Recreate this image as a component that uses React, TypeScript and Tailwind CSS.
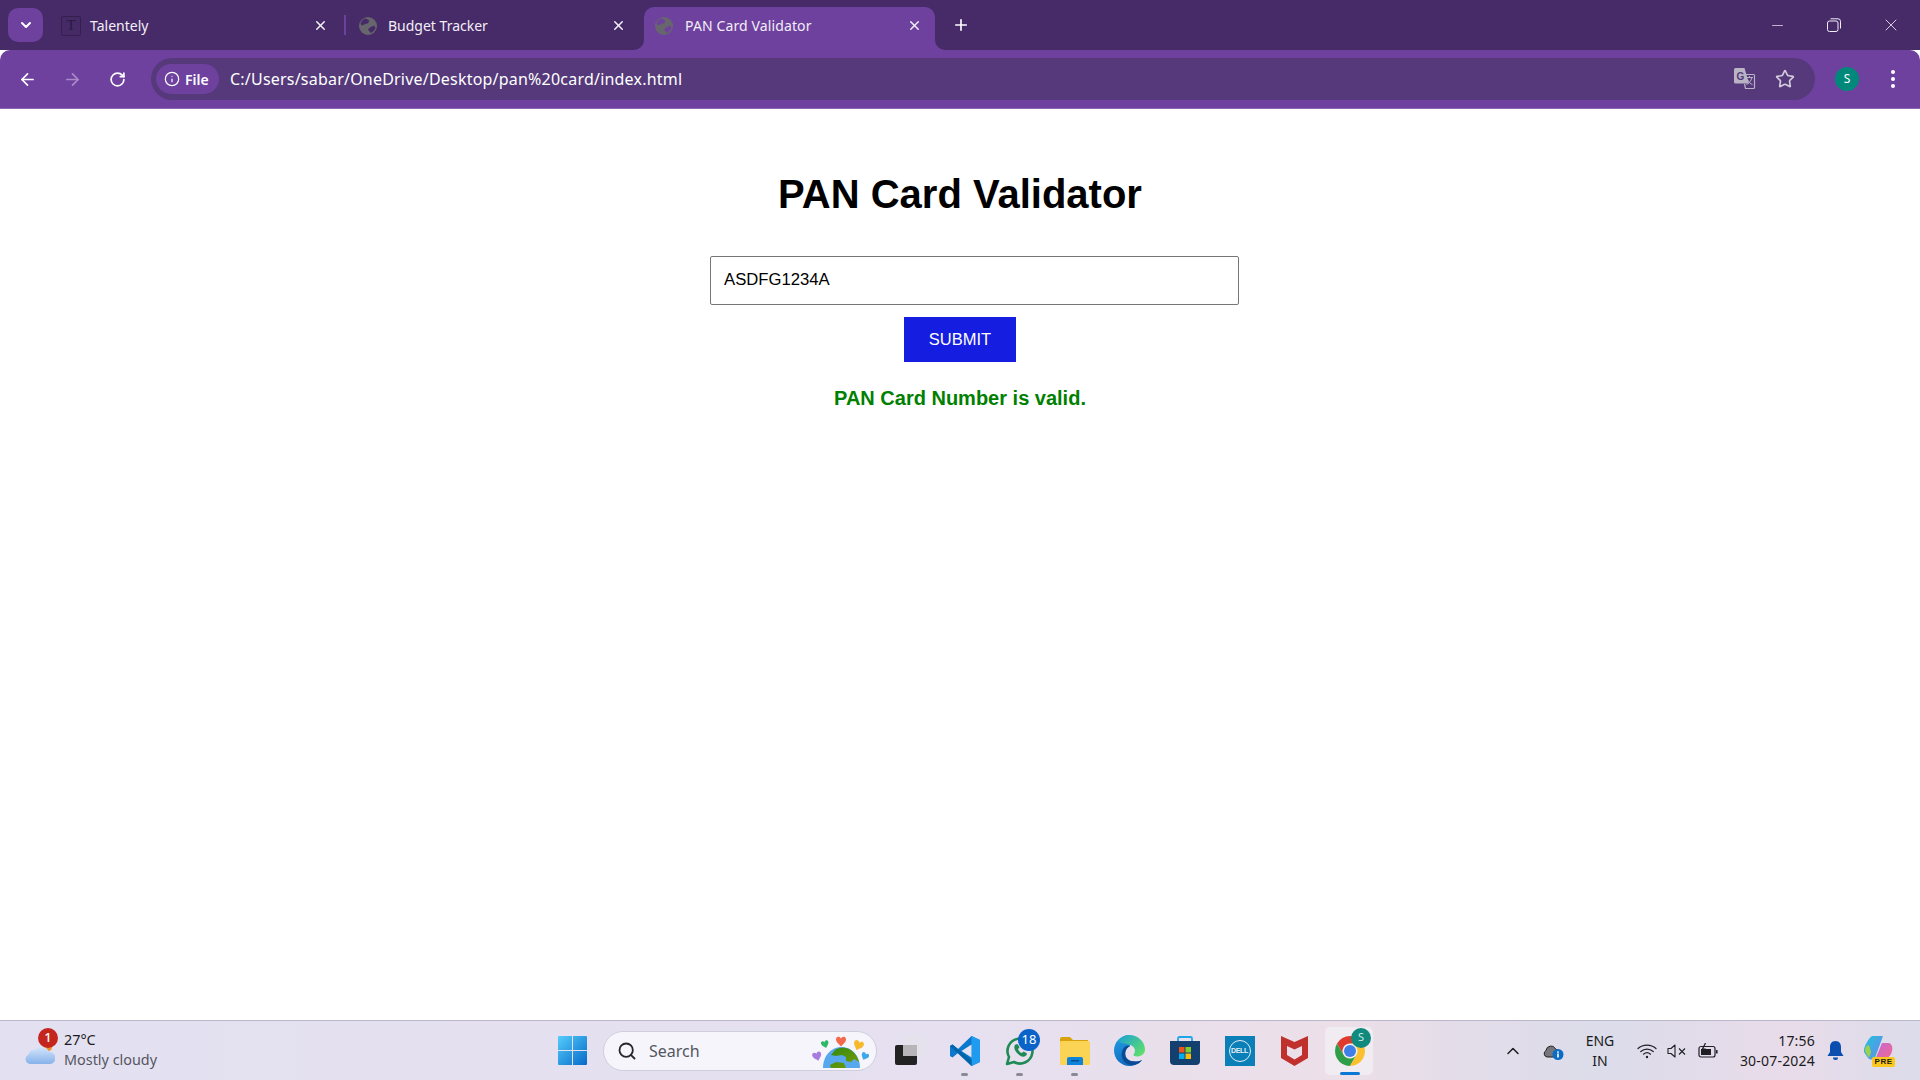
import { ArrowLeft, ArrowRight, ChevronDown, ChevronUp, Info, Minus, Plus, RotateCw, Search, Star, X } from "lucide-react"

const uiFont = { fontFamily: '"Noto Sans", "Open Sans", sans-serif' }

// globe shown for local files in the tab strip
const GlobeIcon = ({ cut }: { cut: string }) => (
  <svg width="18" height="18" viewBox="0 0 18 18">
    <circle cx="9" cy="9" r="9" fill="#66666c" />
    <path d="M6 1.500 10 3 9.500 6 6.500 7 3 8.500 1.500 7C2 4.500 3.500 2.500 6 1.500Z M11 10.500 15 8.500 16.500 10.500C16 13 14 15 12 16L10.500 14.500 9 12.500Z" fill={cut} />
  </svg>
)

const TalentelyIcon = () => (
  <div className="flex h-[20px] w-[20px] items-center justify-center rounded-[2px] border border-[#33204f] bg-[#452a66] text-[15px] leading-none text-[#2a1a42]" style={{ fontFamily: '"Liberation Serif", serif' }}>
    T
  </div>
)

const TabCorner = ({ side }: { side: "left" | "right" }) => (
  <svg width="10" height="10" viewBox="0 0 10 10" className={`absolute bottom-0 ${side === "left" ? "left-[-10px]" : "right-[-10px]"}`}>
    <path d={side === "left" ? "M10 0V10H0A10 10 0 0 0 10 0Z" : "M0 0V10H10A10 10 0 0 1 0 0Z"} fill="#6e419f" />
  </svg>
)

const Tab = ({ title, icon, active }: { title: string; icon: React.ReactNode; active?: boolean }) => (
  <div className={`relative flex h-[43px] w-[291px] items-center rounded-t-[10px] pb-[6px] pl-[11px] pr-[13px] ${active ? "bg-[#6e419f]" : ""}`}>
    {active && <TabCorner side="left" />}
    {active && <TabCorner side="right" />}
    <div className={`flex shrink-0 items-center ${active ? "w-[30px]" : "w-[29px]"}`}>{icon}</div>
    <span className={`flex-1 text-[14px] text-[#f3eef8] ${active ? "tracking-[0.12px]" : "tracking-[0px]"}`}>{title}</span>
    <X size={15} strokeWidth={2.4} className="text-[#f3eef8]" />
  </div>
)

const TranslateIcon = () => (
  <svg width="22" height="22" viewBox="0 0 22 22">
    <path d="M1.500 0H10.500L15 15.500H1.500A1.500 1.500 0 0 1 0 14V1.500A1.500 1.500 0 0 1 1.500 0Z" fill="#b9b3c4" />
    <path d="M10.500 6.500H19.500A1 1 0 0 1 20.500 7.500V19.500A1 1 0 0 1 19.500 20.500H11.500L10.500 16" fill="none" stroke="#b9b3c4" strokeWidth="1.200" />
    <text x="2.500" y="11.500" fontSize="10" fontWeight="700" fill="#55397a" fontFamily="Liberation Sans, sans-serif">G</text>
    <path d="M12 9.500H19M15.500 8V9.500M18 9.500C17 13 15 15.500 12.500 16.500M13.500 11.500C14.500 14 16.500 16 18.500 16.500" fill="none" stroke="#b9b3c4" strokeWidth="1" />
  </svg>
)

const WindowsLogo = () => (
  <svg width="29" height="29" viewBox="0 0 29 29">
    <defs>
      <linearGradient id="win" x1="0" y1="0" x2="1" y2="1">
        <stop offset="0" stopColor="#54cdfb" />
        <stop offset="1" stopColor="#0669c9" />
      </linearGradient>
    </defs>
    <path d="M1 0H14V14H0V1A1 1 0 0 1 1 0ZM15 0H28A1 1 0 0 1 29 1V14H15ZM0 15H14V29H1A1 1 0 0 1 0 28ZM15 15H29V28A1 1 0 0 1 28 29H15Z" fill="url(#win)" />
  </svg>
)

const HEART = "M0 -2.500C-1.500 -5.500 -5.500 -4.500 -5 -1 -4.700 1.500 -2 3 0 5.500 2 3 4.700 1.500 5 -1 5.500 -4.500 1.500 -5.500 0 -2.500Z"

const EarthDoodle = () => (
  <svg width="58" height="39" viewBox="0 0 58 39">
    <defs>
      <linearGradient id="land" x1="0" y1="0" x2="1" y2="1">
        <stop offset="0" stopColor="#2f8a12" />
        <stop offset="1" stopColor="#7d9c04" />
      </linearGradient>
    </defs>
    <path d="M12 39C12 27 20 18 30.500 18 41 18 49 27 49 39Z" fill="#58a8ee" />
    <path d="M24 21C30 17 39 18 44 25 46 27 47 30 48 33L43 30 40 33 35 32 35 28 31 26 25 27 20 26ZM19 36 25 33 33 34 35 39H20Z" fill="url(#land)" />
    <path d={HEART} transform="translate(30 12) scale(1)" fill="#f2694b" />
    <path d={HEART} transform="translate(14 15) scale(0.750) rotate(-15)" fill="#2fb866" />
    <path d={HEART} transform="translate(47.500 16) scale(1) rotate(20)" fill="#f7b92c" />
    <path d={HEART} transform="translate(6 27) scale(0.900) rotate(-15)" fill="#a87bde" />
    <path d={HEART} transform="translate(54 27) scale(0.750) rotate(25)" fill="#3ea9ea" />
  </svg>
)

const TaskViewIcon = () => (
  <svg width="30" height="29" viewBox="0 0 30 29">
    <rect x="0" y="9" width="22" height="20" rx="2" fill="#222222" />
    <rect x="8" y="0" width="22" height="20" rx="2" fill="#e4e2ea" fillOpacity="0.85" />
    <rect x="8" y="9" width="14" height="11" fill="#b7b5b8" />
  </svg>
)

const VsCodeIcon = () => (
  <svg width="30" height="30" viewBox="0 0 30 30">
    <path d="M21.500 0 30 4V26L21.500 30 8 17 2.500 21.500 0 20V10L2.500 8.500 8 13Z" fill="#0a78cc" />
    <path d="M21.500 0 30 4V26L21.500 30Z" fill="#1f9cf0" />
    <path d="M21.500 8.500 11.500 15 21.500 21.500Z" fill="#e4e2f3" />
    <path d="M2.500 8.500 21.500 24V30L0 10Z" fill="#0065a9" />
  </svg>
)

const WhatsAppIcon = () => (
  <svg width="30" height="30" viewBox="0 0 30 30">
    <path d="M2 28 4 21A12.500 12.500 0 1 1 9 26Z" fill="none" stroke="#1f8a55" strokeWidth="2.600" strokeLinejoin="round" />
    <path d="M10.500 8.500C8.500 10 9 13.500 12 17 15 20.500 18.500 21.500 20.500 20 22 19 22 17.500 21.500 17L18.500 15.500 17 17C15 16.500 13.500 14.500 13 13L14.500 11.500 13 8.500C12.500 8 11.500 8 10.500 8.500Z" fill="#1f8a55" />
  </svg>
)

const ExplorerIcon = () => (
  <svg width="30" height="28" viewBox="0 0 30 28">
    <path d="M0 2A2 2 0 0 1 2 0H10L13 3H28V10H0Z" fill="#d9a20c" />
    <rect x="0" y="4" width="30" height="24" rx="1.500" fill="#fcd455" />
    <path d="M7 22A2 2 0 0 1 9 20H21A2 2 0 0 1 23 22V28H7Z" fill="#0d83d9" />
    <rect x="11" y="23" width="8" height="1.500" fill="#0a4f92" />
  </svg>
)

const EdgeIcon = () => (
  <svg width="31" height="31" viewBox="0 0 31 31">
    <defs>
      <linearGradient id="edgeTop" x1="0" y1="0" x2="1" y2="0.800">
        <stop offset="0" stopColor="#1a9fd8" />
        <stop offset="1" stopColor="#5fe06a" />
      </linearGradient>
      <linearGradient id="edgeLow" x1="0" y1="0" x2="0.300" y2="1">
        <stop offset="0" stopColor="#24a0e6" />
        <stop offset="1" stopColor="#0f6cc0" />
      </linearGradient>
    </defs>
    <path d="M15.500 0C7 0 0 7 0 15.500 0 24 7 31 15.500 31 21 31 25.500 28.500 28 25 22 28 15 26.500 12.500 23 10 19 11.500 13 16 11Z" fill="url(#edgeLow)" />
    <path d="M4 5.500C7 2 11 0 15.500 0 24 0 31 7 31 14.500 31 19 27 21.500 23 21.500 21 21.500 19 20.500 19.500 19.500 22 17 21.500 12 16.500 10 11 8 6 9 4 5.500Z" fill="url(#edgeTop)" />
    <path d="M12 11C7 14 6 22 10.500 27 14 30.500 19 30.500 23 29 25 28 27 26.500 28 25 22 28 15 26.500 12.500 23 10 19 11 14 16 11 15 10.500 13.500 10.500 12 11Z" fill="#0c4a94" />
  </svg>
)

const StoreIcon = () => (
  <svg width="30" height="30" viewBox="0 0 30 30">
    <path d="M8 5V2.500A1.500 1.500 0 0 1 9.500 1H20.500A1.500 1.500 0 0 1 22 2.500V5" fill="none" stroke="#1da7e8" strokeWidth="1.800" />
    <path d="M0 5H30V25A4 4 0 0 1 26 29H4A4 4 0 0 1 0 25Z" fill="#14406f" />
    <rect x="9" y="11" width="5.500" height="5.500" fill="#f1511b" />
    <rect x="15.500" y="11" width="5.500" height="5.500" fill="#80cc28" />
    <rect x="9" y="17.500" width="5.500" height="5.500" fill="#00adef" />
    <rect x="15.500" y="17.500" width="5.500" height="5.500" fill="#fbbc09" />
  </svg>
)

const DellIcon = () => (
  <div className="flex h-[30px] w-[30px] items-center justify-center bg-[#0a7fb8]">
    <div className="flex h-[22px] w-[22px] items-center justify-center rounded-full border-[1.500px] border-[#e6eef5] text-[7px] font-bold leading-none tracking-[-0.3px] text-[#e6eef5]" style={{ fontFamily: '"Liberation Sans", sans-serif' }}>
      DELL
    </div>
  </div>
)

const McAfeeIcon = () => (
  <svg width="27" height="30" viewBox="0 0 27 30">
    <path d="M0 0 13.500 6 27 0V22L13.500 30 0 22ZM6 10V19L13.500 23.500 21 19V10L13.500 13.500Z" fill="#c0312e" fillRule="evenodd" />
  </svg>
)

const ChromeIcon = () => (
  <svg width="30" height="30" viewBox="0 0 30 30">
    <path d="M27.990 7.500A15 15 0 0 0 2.010 7.500L8.500 18.750A7.500 7.500 0 0 1 15 7.500Z" fill="#e0392d" />
    <path d="M2.010 7.500A15 15 0 0 0 15 30L21.500 18.750A7.500 7.500 0 0 1 8.500 18.750Z" fill="#2f9e49" />
    <path d="M15 30A15 15 0 0 0 27.990 7.500H15A7.500 7.500 0 0 1 21.500 18.750Z" fill="#fbc02d" />
    <circle cx="15" cy="15" r="6" fill="#3f7fe8" />
  </svg>
)

const OneDriveInfo = () => (
  <svg width="21" height="20" viewBox="0 0 21 20">
    <path d="M4 16A3.500 3.500 0 0 1 3 9.500 5 5 0 0 1 12.500 8 3 3 0 0 1 15 11V16Z" fill="#77767d" stroke="#222" strokeWidth="1" />
    <circle cx="15" cy="13.500" r="5.500" fill="#0a6cc4" />
    <rect x="14.200" y="12.500" width="1.600" height="4" fill="#fff" />
    <rect x="14.200" y="10.300" width="1.600" height="1.500" fill="#fff" />
  </svg>
)

const WifiIcon = () => (
  <svg width="20" height="16" viewBox="0 0 20 16" fill="none" stroke="#1f1f24" strokeWidth="1.200" strokeLinecap="round">
    <path d="M1 5.500C6 1 14 1 19 5.500M3.800 8.500C7.500 5.200 12.500 5.200 16.200 8.500M6.500 11.200C8.500 9.500 11.500 9.500 13.500 11.200" />
    <circle cx="10" cy="14" r="1.200" fill="#1f1f24" stroke="none" />
  </svg>
)

const MuteIcon = () => (
  <svg width="19" height="14" viewBox="0 0 19 14" fill="none" stroke="#1f1f24" strokeWidth="1.100">
    <path d="M1 4.500H4L8 1V13L4 9.500H1Z" strokeLinejoin="round" />
    <path d="M12 4.500 18 10.500M18 4.500 12 10.500" />
  </svg>
)

const BatteryIcon = () => (
  <svg width="20" height="16" viewBox="0 0 20 16">
    <rect x="1" y="3.500" width="16" height="10.500" rx="2" fill="none" stroke="#1f1f24" strokeWidth="1.200" />
    <rect x="3" y="6" width="10" height="6" fill="#1f1f24" />
    <rect x="18" y="7" width="1.600" height="3.500" rx="0.500" fill="#1f1f24" />
    <path d="M7.500 0 4.500 6H7L5.500 9" fill="none" stroke="#1f1f24" strokeWidth="1.200" />
  </svg>
)

const BellIcon = () => (
  <svg width="17" height="20" viewBox="0 0 17 20">
    <path d="M8.500 0C4.500 0 3 3 3 6V11L0.500 15H16.500L14 11V6C14 3 12.500 0 8.500 0Z" fill="#0a4fb0" />
    <path d="M6 16.500H11A2.500 2.500 0 0 1 6 16.500Z" fill="#0a4fb0" />
  </svg>
)

const CopilotIcon = () => (
  <div className="relative h-[29px] w-[30px]">
    <svg width="29" height="24" viewBox="0 0 29 24">
      <defs>
        <linearGradient id="copA" x1="0" y1="0" x2="1" y2="1">
          <stop offset="0" stopColor="#21c4d8" />
          <stop offset="0.600" stopColor="#4f9de8" />
          <stop offset="1" stopColor="#3ecf7a" />
        </linearGradient>
        <linearGradient id="copB" x1="0" y1="0" x2="1" y2="1">
          <stop offset="0" stopColor="#c467dc" />
          <stop offset="1" stopColor="#f26a8a" />
        </linearGradient>
      </defs>
      <path d="M8 0H19L11 22C9 24 6 24 4 22L0 16C-1 13 3 4 8 0Z" fill="url(#copA)" />
      <path d="M2 17 C0 14 1 10 5 9L7 16 5 22Z" fill="#9ad24a" />
      <path d="M18 7H25C28 8 29 12 28 15 27 20 23 23 19 24H11Z" fill="url(#copB)" />
    </svg>
    <span className="absolute bottom-[-2px] right-[-1px] rounded-[2px] bg-[#fdc81e] px-[2.500px] text-[8px] font-bold leading-[10px] tracking-[0.5px] text-[#1a1a1a]" style={{ fontFamily: '"Liberation Sans", sans-serif' }}>
      PRE
    </span>
  </div>
)

const Pinned = ({ children, running, active }: { children: React.ReactNode; running?: boolean; active?: boolean }) => (
  <div className="relative flex h-[48px] w-[55px] items-center justify-center">
    {children}
    {running && <span className="absolute bottom-[-1px] h-[3px] w-[7px] rounded-full bg-[#8a8a94]" />}
    {active && <span className="absolute bottom-[0px] h-[3px] w-[20px] rounded-full bg-[#0a78d4]" />}
  </div>
)

export default function App() {
  return (
    <div className="flex h-screen w-full flex-col overflow-hidden bg-white">
      {/* tab strip */}
      <div className="flex h-[50px] shrink-0 items-end bg-[#462b68]" style={uiFont}>
        <div className="mb-[8px] ml-[8px] flex h-[34px] w-[35px] items-center justify-center rounded-[10px] bg-[#6e419f] text-white">
          <ChevronDown size={16} strokeWidth={3} />
        </div>
        <div className="ml-[7px] flex items-end">
          <Tab title="Talentely" icon={<TalentelyIcon />} />
          <div className="mb-[15px] flex w-[7px] justify-center">
            <div className="h-[20px] w-[2px] bg-[#6e419f]" />
          </div>
          <Tab title="Budget Tracker" icon={<GlobeIcon cut="#462b68" />} />
          <div className="w-[5px]" />
          <Tab title="PAN Card Validator" icon={<GlobeIcon cut="#6e419f" />} active />
        </div>
        <div className="mb-[8px] ml-[12px] flex h-[34px] w-[28px] items-center justify-center text-white">
          <Plus size={18} strokeWidth={2.2} />
        </div>
        <div className="mb-[15px] ml-auto flex items-center text-[#f2eef6]">
          <div className="flex w-[56px] justify-center"><Minus size={17} strokeWidth={1} /></div>
          <div className="flex w-[58px] justify-center">
            <svg width="14" height="14" viewBox="0 0 14 14" fill="none" stroke="#f2eef6" strokeWidth="1">
              <rect x="0.500" y="3" width="10.500" height="10.500" rx="2" />
              <path d="M3.500 0.800H11A2.500 2.500 0 0 1 13.500 3.300V10.500" />
            </svg>
          </div>
          <div className="flex w-[57px] justify-center pr-[1px]"><X size={20} strokeWidth={1} /></div>
        </div>
      </div>

      {/* toolbar */}
      <div className="flex h-[59px] shrink-0 items-start rounded-t-[10px] border-b border-[#8c66b3] bg-[#6e419f] pt-[8px]" style={uiFont}>
        <div className="flex h-[42px] w-[151px] items-center pl-[18px] text-white">
          <ArrowLeft size={19} strokeWidth={2.2} />
          <ArrowRight size={19} strokeWidth={2.2} className="ml-[26px] text-[#a98ac8]" />
          <RotateCw size={17} strokeWidth={2.4} className="ml-[27px]" />
        </div>
        <div className="flex h-[42px] w-[1664px] items-center rounded-full bg-[#55397a] pl-[5px] pr-[20px]">
          <div className="flex h-[30px] w-[63px] items-center gap-[5px] rounded-full bg-[#6e419f] pl-[8px] text-[14px] font-semibold text-white">
            <Info size={16} strokeWidth={1.8} />
            File
          </div>
          <span className="ml-[11px] flex-1 text-[16px] tracking-[0.21px] text-white">C:/Users/sabar/OneDrive/Desktop/pan%20card/index.html</span>
          <TranslateIcon />
          <Star size={20} strokeWidth={2} className="ml-[19px] text-[#d3cbdc]" />
        </div>
        <div className="ml-[20px] flex h-[42px] w-[24px] items-center">
          <div className="flex h-[24px] w-[24px] items-center justify-center rounded-full bg-[#00897b] text-[12px] text-white">S</div>
        </div>
        <div className="ml-[32px] flex h-[42px] flex-col items-center justify-center gap-[3px]">
          <span className="h-[4px] w-[4px] rounded-full bg-white" />
          <span className="h-[4px] w-[4px] rounded-full bg-white" />
          <span className="h-[4px] w-[4px] rounded-full bg-white" />
        </div>
      </div>

      {/* page */}
      <main className="flex-1 bg-white pt-[62px] text-black" style={{ fontFamily: '"Liberation Sans", Arial, sans-serif' }}>
        <div className="mx-auto w-[500px]">
          <h1 className="text-center text-[40px] font-bold leading-[46px]">PAN Card Validator</h1>
          <input
            readOnly
            value="ASDFG1234A"
            className="mt-[39px] box-content block h-[19px] w-full rounded-[2px] border border-[#767676] pb-[15px] pl-[13px] pr-[14px] pt-[13px] text-[16.7px] text-black outline-none"
          />
          <div className="mt-[12px] flex justify-center">
            <button className="h-[45px] w-[112px] bg-[#151ee0] text-[16.5px] uppercase text-white">Submit</button>
          </div>
          <p className="mt-[25px] text-center text-[20px] font-bold leading-[23px] text-[#008000]">PAN Card Number is valid.</p>
        </div>
      </main>

      {/* taskbar */}
      <div className="flex h-[60px] shrink-0 items-center border-t border-[#b9b7c9] bg-[linear-gradient(90deg,#e3e1f1_0%,#e6e0f0_50%,#ecdfe8_70%,#e3dde9_76%,#dcdcea_84%,#e9dcea_93%,#dcdcea_100%)]" style={uiFont}>
        <div className="relative ml-[25px] flex w-[533px] items-center">
          <svg width="30" height="20" viewBox="0 0 30 20" className="mt-[6px]">
            <defs>
              <linearGradient id="cloud" x1="0" y1="0" x2="0" y2="1">
                <stop offset="0" stopColor="#d6e6fb" />
                <stop offset="1" stopColor="#86b2ea" />
              </linearGradient>
            </defs>
            <circle cx="23" cy="3" r="4" fill="#f0902a" />
            <path d="M5 20A5 5 0 0 1 3.500 10.500 6 6 0 0 1 10 6 8 8 0 0 1 24 8 6 6 0 0 1 25 20Z" fill="url(#cloud)" />
          </svg>
          <span className="absolute left-[13px] top-[-2px] flex h-[20px] w-[20px] items-center justify-center rounded-full bg-[#c4261d] text-[13px] font-medium text-white">1</span>
          <div className="mb-[2px] ml-[9px] flex flex-col text-[14.4px] leading-[20px]">
            <span className="text-[#1b1b22]">27°C</span>
            <span className="text-[#55555f]">Mostly cloudy</span>
          </div>
        </div>
        <WindowsLogo />
        <div className="ml-[16px] flex h-[40px] w-[274px] items-center rounded-full border border-[#cfcedd] bg-[#f6f5fc] pl-[13px] pr-[7px]">
          <Search size={20} strokeWidth={2.2} className="text-[#26262b]" />
          <span className="ml-[12px] flex-1 text-[16px] text-[#55555f]">Search</span>
          <div className="mb-[4px]"><EarthDoodle /></div>
        </div>
        <div className="ml-[5px] flex items-center">
          <Pinned><TaskViewIcon /></Pinned>
          <Pinned running><VsCodeIcon /></Pinned>
          <Pinned running>
            <WhatsAppIcon />
            <span className="absolute right-[7px] top-[2px] flex h-[22px] w-[22px] items-center justify-center rounded-full bg-[#0a63c9] text-[13px] text-white">18</span>
          </Pinned>
          <Pinned running><ExplorerIcon /></Pinned>
          <Pinned><EdgeIcon /></Pinned>
          <Pinned><StoreIcon /></Pinned>
          <Pinned><DellIcon /></Pinned>
          <Pinned><McAfeeIcon /></Pinned>
          <Pinned active>
            <div className="absolute inset-y-0 left-[3px] w-[48px] rounded-[5px] bg-[#f1ecf2]" />
            <div className="relative"><ChromeIcon /></div>
            <span className="absolute right-[6px] top-[1px] flex h-[20px] w-[20px] items-center justify-center rounded-full bg-[#0f8a7c] text-[11px] text-[#cfe9e4]">S</span>
          </Pinned>
        </div>
        <div className="ml-[126px] flex items-center text-[#1b1b22]">
          <ChevronUp size={20} strokeWidth={1.8} />
          <div className="ml-[20px]"><OneDriveInfo /></div>
          <div className="ml-[18px] w-[36px] text-center text-[14px] leading-[20px]">
            ENG
            <br />
            IN
          </div>
          <div className="ml-[19px]"><WifiIcon /></div>
          <div className="ml-[10px]"><MuteIcon /></div>
          <div className="ml-[12px]"><BatteryIcon /></div>
          <div className="ml-[17px] w-[80px] text-right text-[14px] leading-[20px] tracking-[0.2px]">
            17:56
            <br />
            30-07-2024
          </div>
          <div className="ml-[12px]"><BellIcon /></div>
          <div className="ml-[20px]"><CopilotIcon /></div>
        </div>
      </div>
    </div>
  )
}
